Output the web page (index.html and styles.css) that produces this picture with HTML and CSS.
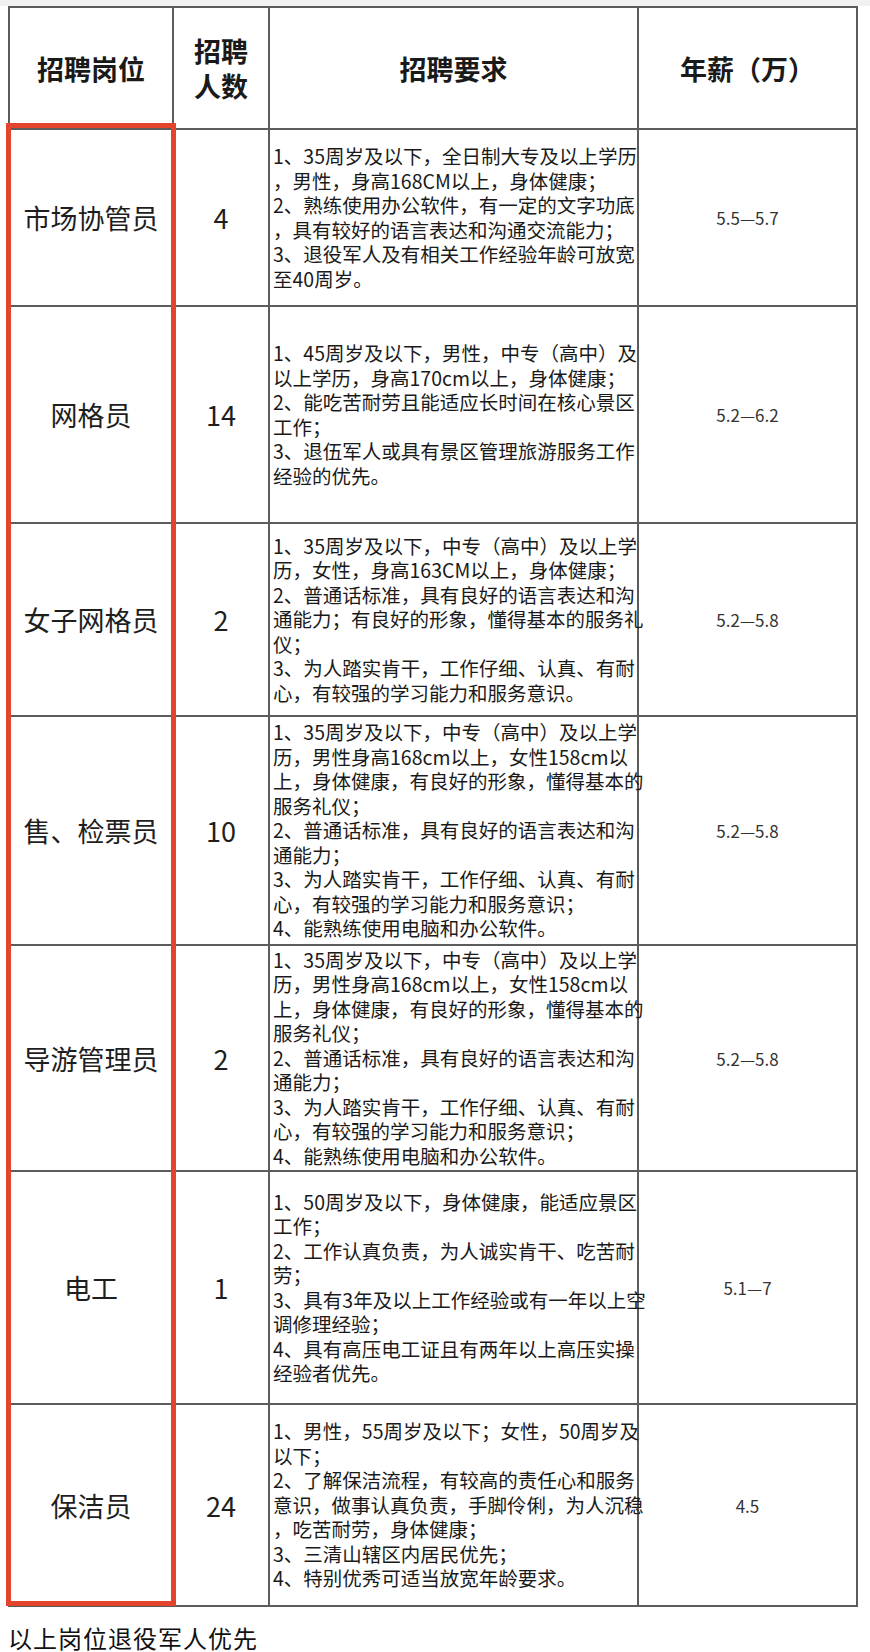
FILE: index.html
```html
<!DOCTYPE html>
<html lang="zh-CN">
<head>
<meta charset="utf-8">
<title>招聘岗位</title>
<link rel="stylesheet" href="styles.css">
</head>
<body>
<div class="topstrip"></div>
<div class="sheet">
  <table class="jobs">
    <colgroup>
      <col class="c-pos"><col class="c-num"><col class="c-req"><col class="c-pay">
    </colgroup>
    <thead>
      <tr class="rh">
        <th>招聘岗位</th>
        <th>招聘<br>人数</th>
        <th>招聘要求</th>
        <th>年薪（万）</th>
      </tr>
    </thead>
    <tbody>
      <tr class="r1">
        <td class="pos">市场协管员</td>
        <td class="num">4</td>
        <td class="req">1、35周岁及以下，全日制大专及以上学历<br>，男性，身高168CM以上，身体健康；<br>2、熟练使用办公软件，有一定的文字功底<br>，具有较好的语言表达和沟通交流能力；<br>3、退役军人及有相关工作经验年龄可放宽<br>至40周岁。</td>
        <td class="pay">5.5—5.7</td>
      </tr>
      <tr class="r2">
        <td class="pos">网格员</td>
        <td class="num">14</td>
        <td class="req">1、45周岁及以下，男性，中专（高中）及<br>以上学历，身高170cm以上，身体健康；<br>2、能吃苦耐劳且能适应长时间在核心景区<br>工作；<br>3、退伍军人或具有景区管理旅游服务工作<br>经验的优先。</td>
        <td class="pay">5.2—6.2</td>
      </tr>
      <tr class="r3">
        <td class="pos">女子网格员</td>
        <td class="num">2</td>
        <td class="req">1、35周岁及以下，中专（高中）及以上学<br>历，女性，身高163CM以上，身体健康；<br>2、普通话标准，具有良好的语言表达和沟<br>通能力；有良好的形象，懂得基本的服务礼<br>仪；<br>3、为人踏实肯干，工作仔细、认真、有耐<br>心，有较强的学习能力和服务意识。</td>
        <td class="pay">5.2—5.8</td>
      </tr>
      <tr class="r4">
        <td class="pos">售、检票员</td>
        <td class="num">10</td>
        <td class="req">1、35周岁及以下，中专（高中）及以上学<br>历，男性身高168cm以上，女性158cm以<br>上，身体健康，有良好的形象，懂得基本的<br>服务礼仪；<br>2、普通话标准，具有良好的语言表达和沟<br>通能力；<br>3、为人踏实肯干，工作仔细、认真、有耐<br>心，有较强的学习能力和服务意识；<br>4、能熟练使用电脑和办公软件。</td>
        <td class="pay">5.2—5.8</td>
      </tr>
      <tr class="r5">
        <td class="pos">导游管理员</td>
        <td class="num">2</td>
        <td class="req">1、35周岁及以下，中专（高中）及以上学<br>历，男性身高168cm以上，女性158cm以<br>上，身体健康，有良好的形象，懂得基本的<br>服务礼仪；<br>2、普通话标准，具有良好的语言表达和沟<br>通能力；<br>3、为人踏实肯干，工作仔细、认真、有耐<br>心，有较强的学习能力和服务意识；<br>4、能熟练使用电脑和办公软件。</td>
        <td class="pay">5.2—5.8</td>
      </tr>
      <tr class="r6">
        <td class="pos">电工</td>
        <td class="num">1</td>
        <td class="req">1、50周岁及以下，身体健康，能适应景区<br>工作；<br>2、工作认真负责，为人诚实肯干、吃苦耐<br>劳；<br>3、具有3年及以上工作经验或有一年以上空<br>调修理经验；<br>4、具有高压电工证且有两年以上高压实操<br>经验者优先。</td>
        <td class="pay">5.1—7</td>
      </tr>
      <tr class="r7">
        <td class="pos">保洁员</td>
        <td class="num">24</td>
        <td class="req">1、男性，55周岁及以下；女性，50周岁及<br>以下；<br>2、了解保洁流程，有较高的责任心和服务<br>意识，做事认真负责，手脚伶俐，为人沉稳<br>，吃苦耐劳，身体健康；<br>3、三清山辖区内居民优先；<br>4、特别优秀可适当放宽年龄要求。</td>
        <td class="pay">4.5</td>
      </tr>
    </tbody>
  </table>
  <div class="highlight"></div>
</div>
<p class="note">以上岗位退役军人优先</p>
</body>
</html>
```

FILE: styles.css
```css
html, body {
  margin: 0;
  padding: 0;
  background: #ffffff;
}

body {
  font-family: "Noto Sans CJK SC", "Noto Sans", sans-serif;
  color: #1c1c1c;
}

.topstrip {
  height: 6px;
  background: #f1f1f1;
}

.sheet {
  position: relative;
  margin-left: 8px;
  width: 848px;
}

.jobs {
  border-collapse: collapse;
  table-layout: fixed;
  width: 848px;
}

.c-pos { width: 164px; }
.c-num { width: 96px; }
.c-req { width: 369px; }
.c-pay { width: 219px; }

.jobs th,
.jobs td {
  border: 2px solid #5c5c5c;
  padding: 0;
  vertical-align: middle;
  text-align: center;
}

.jobs th {
  font-size: 27px;
  font-weight: 700;
  color: #1a1a1a;
  line-height: 35px;
}

.rh { height: 122px; }
.r1 { height: 177px; }
.r2 { height: 217px; }
.r3 { height: 193px; }
.r4 { height: 229px; }
.r5 { height: 226px; }
.r6 { height: 233px; }
.r7 { height: 202px; }

.pos {
  font-size: 27px;
  color: #1e1e1e;
}

.num {
  font-size: 27px;
  color: #1e1e1e;
}

.jobs td.req {
  text-align: left;
  font-size: 19.5px;
  line-height: 24.5px;
  padding: 0 0 0 3px;
  white-space: nowrap;
  color: #1a1a1a;
}

.pay {
  font-size: 17px;
  color: #333333;
}

.highlight {
  position: absolute;
  left: -2px;
  top: 117px;
  width: 160px;
  height: 1473px;
  border: 5px solid #e4432c;
  pointer-events: none;
}

.note {
  margin: 16px 0 0 8px;
  font-size: 24px;
  letter-spacing: 1px;
  line-height: 30px;
  color: #111111;
}
```
